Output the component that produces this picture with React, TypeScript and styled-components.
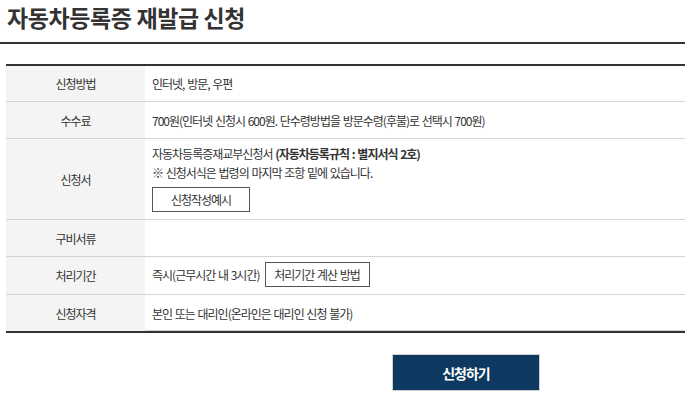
import React from "react";
import styled, { createGlobalStyle, css } from "styled-components";

const GlobalStyle = createGlobalStyle`
  html, body {
    margin: 0;
    padding: 0;
    background: #ffffff;
  }
  body {
    font-family: "Noto Sans CJK KR", "Noto Sans", sans-serif;
    color: #333333;
  }
`;

function App() {
  const rows: { label: string; height: number; content: React.ReactNode }[] = [
    { label: "신청방법", height: 35, content: "인터넷, 방문, 우편" },
    {
      label: "수수료",
      height: 36,
      content: "700원(인터넷 신청시 600원. 단수령방법을 방문수령(후불)로 선택시 700원)",
    },
    {
      label: "신청서",
      height: 80,
      content: (
        <>
          <Line>
            자동차등록증재교부신청서 <Strong>(자동차등록규칙 : 별지서식 2호)</Strong>
          </Line>
          <Line>※ 신청서식은 법령의 마지막 조항 밑에 있습니다.</Line>
          <OutlineButton $width={98} $top={5}>
            신청작성예시
          </OutlineButton>
        </>
      ),
    },
    { label: "구비서류", height: 36, content: "" },
    {
      label: "처리기간",
      height: 37,
      content: (
        <Inline>
          <span>즉시(근무시간 내 3시간)</span>
          <OutlineButton $width={105}>처리기간 계산 방법</OutlineButton>
        </Inline>
      ),
    },
    { label: "신청자격", height: 36, content: "본인 또는 대리인(온라인은 대리인 신청 불가)" },
  ];

  return (
    <>
      <GlobalStyle />
      <Page>
        <Title>자동차등록증 재발급 신청</Title>
        <Table>
          {rows.map((row, i) => (
            <Row key={row.label} $height={row.height} $last={i === rows.length - 1}>
              <Label>{row.label}</Label>
              <Cell $stacked={row.height > 60}>{row.content}</Cell>
            </Row>
          ))}
        </Table>
        <ButtonBar>
          <SubmitButton>신청하기</SubmitButton>
        </ButtonBar>
      </Page>
    </>
  );
}

export default App;

const Page = styled.div(
  () => css`
    width: 685px;
    display: flex;
    flex-direction: column;
  `
);

const Title = styled.h2(
  () => css`
    margin: 0;
    height: 44px;
    padding-left: 7px;
    box-sizing: border-box;
    border-bottom: 2px solid #333333;
    font-size: 23px;
    font-weight: 700;
    letter-spacing: -0.4px;
    line-height: 34px;
    color: #333333;
  `
);

const Table = styled.div(
  () => css`
    margin: 20px 0 0 6px;
    border-top: 2px solid #333333;
    border-bottom: 2px solid #333333;
    display: flex;
    flex-direction: column;
  `
);

const Row = styled.div(
  ({ $height, $last }: { $height: number; $last: boolean }) => css`
    display: grid;
    grid-template-columns: 139px 1fr;
    height: ${$height}px;
    border-bottom: ${$last ? "none" : "1px solid #d4d4d4"};
    ${$last &&
    css`
      box-shadow: inset 0 -1px 0 #d4d4d4;
    `}
  `
);

const Label = styled.div(
  () => css`
    background: #f4f4f4;
    display: flex;
    align-items: center;
    justify-content: center;
    font-size: 12px;
    letter-spacing: -1px;
    color: #333333;
  `
);

const Cell = styled.div(
  ({ $stacked }: { $stacked: boolean }) => css`
    padding: ${$stacked ? "5px 0 7px 7px" : "0 0 0 7px"};
    display: flex;
    flex-direction: column;
    justify-content: ${$stacked ? "flex-start" : "center"};
    align-items: flex-start;
    font-size: 12px;
    letter-spacing: -1px;
    word-spacing: 1px;
    color: #333333;
  `
);

const Line = styled.div(
  () => css`
    line-height: 19px;
  `
);

const Strong = styled.strong(
  () => css`
    font-weight: 700;
  `
);

const Inline = styled.div(
  () => css`
    display: flex;
    align-items: center;
    gap: 5px;
    margin-top: -2px;
  `
);

const OutlineButton = styled.button(
  ({ $width, $top = 0 }: { $width: number; $top?: number }) => css`
    width: ${$width}px;
    height: 25px;
    margin-top: ${$top}px;
    padding: 0;
    background: #ffffff;
    border: 1px solid #555555;
    font-family: "Noto Sans CJK KR", "Noto Sans", sans-serif;
    font-size: 12px;
    letter-spacing: -1px;
    word-spacing: 1px;
    color: #333333;
  `
);

const ButtonBar = styled.div(
  () => css`
    display: flex;
    padding: 21px 0 0 392px;
  `
);

const SubmitButton = styled.button(
  () => css`
    width: 148px;
    height: 37px;
    background: #0e3a61;
    border: 1px solid #d0d0d0;
    color: #ffffff;
    font-family: "Noto Sans CJK KR", "Noto Sans", sans-serif;
    font-size: 14px;
    font-weight: 700;
    letter-spacing: -1px;
  `
);
